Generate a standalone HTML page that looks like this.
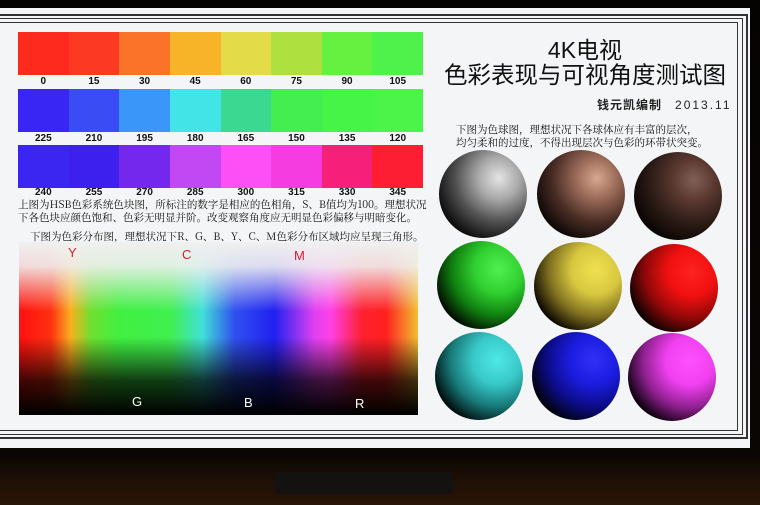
<!DOCTYPE html>
<html><head><meta charset="utf-8"><style>
*{margin:0;padding:0;box-sizing:border-box}
body{width:760px;height:505px;overflow:hidden;background:linear-gradient(#050302 0,#0a0604 455px,#1e0f05 480px,#2a1507 505px);position:relative;font-family:"Liberation Sans","Noto Sans CJK SC",sans-serif}
.abs{position:absolute}
.screen{left:0;top:8px;width:750px;height:440px;background:#f4f5f6}
.ln{position:absolute;border:1px solid #333}
.row{position:absolute;left:18px;width:405px;height:43px;display:flex}
.row div{flex:1}
.lab{position:absolute;left:18px;width:405px;display:flex;font-weight:bold;font-size:10px;color:#111}
.lab span{flex:1;text-align:center}
.txt{font-family:"Noto Serif CJK SC",serif;font-size:10.5px;color:#111;white-space:nowrap}
.sp{position:absolute;width:88px;height:88px;border-radius:50%}
</style></head><body>
<div class="abs screen"></div>
<div class="ln" style="left:-2px;top:14px;width:750px;height:425px;border-width:2px"></div>
<div class="ln" style="left:-2px;top:18px;width:745px;height:417px"></div>
<div class="ln" style="left:-2px;top:22px;width:740px;height:409px"></div>
<div class="abs" style="left:275px;top:472px;width:178px;height:22px;background:#141210;border-radius:0 0 4px 4px"></div>

<div class="row" style="top:32px"><div style="background:#fe2a1e"></div><div style="background:#fc3a24"></div><div style="background:#fb7328"></div><div style="background:#f8b428"></div><div style="background:#e3dc48"></div><div style="background:#aee040"></div><div style="background:#66f040"></div><div style="background:#4ef24a"></div></div>
<div class="lab" style="top:76px"><span>0</span><span>15</span><span>30</span><span>45</span><span>60</span><span>75</span><span>90</span><span>105</span></div>
<div class="row" style="top:89px"><div style="background:#3a26f4"></div><div style="background:#3a4cf4"></div><div style="background:#3a96f8"></div><div style="background:#42e4e8"></div><div style="background:#3ad890"></div><div style="background:#44ee50"></div><div style="background:#46f448"></div><div style="background:#4cf44a"></div></div>
<div class="lab" style="top:133px"><span>225</span><span>210</span><span>195</span><span>180</span><span>165</span><span>150</span><span>135</span><span>120</span></div>
<div class="row" style="top:145px"><div style="background:#3a26f0"></div><div style="background:#3e20ee"></div><div style="background:#7428ee"></div><div style="background:#c248f4"></div><div style="background:#fc50f6"></div><div style="background:#f43ce0"></div><div style="background:#f6207a"></div><div style="background:#fe1e34"></div></div>
<div class="lab" style="top:187px"><span>240</span><span>255</span><span>270</span><span>285</span><span>300</span><span>315</span><span>330</span><span>345</span></div>
<div class="abs txt" style="left:18px;top:197px">上图为HSB色彩系统色块图，所标注的数字是相应的色相角，S、B值均为100。理想状况</div>
<div class="abs txt" style="left:18px;top:210px">下各色块应颜色饱和、色彩无明显并阶。改变观察角度应无明显色彩偏移与明暗变化。</div>
<div class="abs txt" style="left:30px;top:229px">下图为色彩分布图，理想状况下R、G、B、Y、C、M色彩分布区域均应呈现三角形。</div>

<div class="abs" style="left:19px;top:242px;width:399px;height:173px;background:linear-gradient(90deg,#ff1010 0%,#ff3010 8%,#f8b020 13%,#70e030 18%,#40f040 25%,#40f050 38%,#40e0d8 46%,#3050f0 54%,#2020f0 64%,#e040f0 74%,#ff40e8 78%,#ff2030 86%,#ff2020 92%,#f0c030 100%)"></div>
<div class="abs" style="left:19px;top:242px;width:399px;height:173px;background:linear-gradient(#f0f0f0 0%,rgba(240,240,240,.9) 14%,rgba(240,240,240,0) 40%,rgba(0,0,0,0) 55%,rgba(0,0,0,.75) 80%,#000 100%)"></div>
<div class="abs" style="left:68px;top:245px;color:#d02030;font-size:13px">Y</div>
<div class="abs" style="left:182px;top:247px;color:#d02030;font-size:13px">C</div>
<div class="abs" style="left:294px;top:248px;color:#d02030;font-size:13px">M</div>
<div class="abs" style="left:132px;top:394px;color:#fff;font-size:13px">G</div>
<div class="abs" style="left:244px;top:395px;color:#fff;font-size:13px">B</div>
<div class="abs" style="left:355px;top:396px;color:#fff;font-size:13px">R</div>

<div class="abs" style="left:426px;top:38px;width:318px;text-align:center;font-size:23px;line-height:25px;color:#111">4K电视<br><span style="font-size:23.5px">色彩表现与可视角度测试图</span></div>
<div class="abs" style="left:597px;top:96px;font-size:12px;font-weight:bold;color:#222;letter-spacing:1px">钱元凯编制 &nbsp; <span style="letter-spacing:2px;font-weight:normal">2013.11</span></div>
<div class="abs txt" style="left:456px;top:122px">下图为色球图，理想状况下各球体应有丰富的层次，</div>
<div class="abs txt" style="left:456px;top:135px">均匀柔和的过度，不得出现层次与色彩的环带状突变。</div>

<div class="sp" style="left:439px;top:150px;background:radial-gradient(circle 75px at 68% 32%,#e4e4e4 0%,#a8a8a8 28%,#505050 58%,#101010 85%)"></div>
<div class="sp" style="left:537px;top:150px;background:radial-gradient(circle 75px at 68% 32%,#d8a890 0%,#9a6a58 28%,#4a2e26 58%,#120a08 85%)"></div>
<div class="sp" style="left:634px;top:152px;background:radial-gradient(circle 75px at 68% 32%,#806058 0%,#5a3830 28%,#2c1c16 58%,#0c0604 85%)"></div>
<div class="sp" style="left:437px;top:241px;background:radial-gradient(circle 75px at 70% 32%,#50f050 0%,#30d030 32%,#108010 62%,#021002 88%)"></div>
<div class="sp" style="left:534px;top:242px;background:radial-gradient(circle 75px at 70% 32%,#f0e050 0%,#d8c840 32%,#807020 62%,#100c02 88%)"></div>
<div class="sp" style="left:630px;top:244px;background:radial-gradient(circle 75px at 70% 32%,#ff2020 0%,#f01010 32%,#900808 62%,#100202 88%)"></div>
<div class="sp" style="left:435px;top:332px;background:radial-gradient(circle 75px at 70% 32%,#50e8e8 0%,#38c8c8 32%,#187878 62%,#021010 88%)"></div>
<div class="sp" style="left:532px;top:332px;background:radial-gradient(circle 75px at 70% 32%,#3030f8 0%,#1c1ce0 32%,#0c0c88 62%,#020210 88%)"></div>
<div class="sp" style="left:628px;top:333px;background:radial-gradient(circle 75px at 70% 32%,#ff50ff 0%,#f040f0 32%,#902090 62%,#100210 88%)"></div>
</body></html>
